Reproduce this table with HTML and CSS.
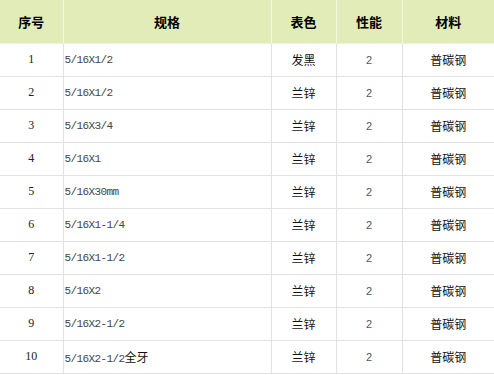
FILE: index.html
```html
<!DOCTYPE html>
<html lang="zh-CN">
<head>
    <meta charset="UTF-8">
    <meta name="viewport" content="width=device-width, initial-scale=1.0">
    <title>产品规格</title>
    <link rel="stylesheet" href="styles.css">
</head>
<body>
    <table class="spec-table">
        <colgroup>
            <col class="col-no">
            <col class="col-size">
            <col class="col-color">
            <col class="col-grade">
            <col class="col-material">
        </colgroup>
        <thead>
            <tr>
                <th>序号</th>
                <th>规格</th>
                <th>表色</th>
                <th>性能</th>
                <th>材料</th>
            </tr>
        </thead>
        <tbody>
            <tr><td class="no">1</td><td class="size">5/16X1/2</td><td class="cn">发黑</td><td class="grade">2</td><td class="cn">普碳钢</td></tr>
            <tr><td class="no">2</td><td class="size">5/16X1/2</td><td class="cn">兰锌</td><td class="grade">2</td><td class="cn">普碳钢</td></tr>
            <tr><td class="no">3</td><td class="size">5/16X3/4</td><td class="cn">兰锌</td><td class="grade">2</td><td class="cn">普碳钢</td></tr>
            <tr><td class="no">4</td><td class="size">5/16X1</td><td class="cn">兰锌</td><td class="grade">2</td><td class="cn">普碳钢</td></tr>
            <tr><td class="no">5</td><td class="size">5/16X30mm</td><td class="cn">兰锌</td><td class="grade">2</td><td class="cn">普碳钢</td></tr>
            <tr><td class="no">6</td><td class="size">5/16X1-1/4</td><td class="cn">兰锌</td><td class="grade">2</td><td class="cn">普碳钢</td></tr>
            <tr><td class="no">7</td><td class="size">5/16X1-1/2</td><td class="cn">兰锌</td><td class="grade">2</td><td class="cn">普碳钢</td></tr>
            <tr><td class="no">8</td><td class="size">5/16X2</td><td class="cn">兰锌</td><td class="grade">2</td><td class="cn">普碳钢</td></tr>
            <tr><td class="no">9</td><td class="size">5/16X2-1/2</td><td class="cn">兰锌</td><td class="grade">2</td><td class="cn">普碳钢</td></tr>
            <tr><td class="no">10</td><td class="size">5/16X2-1/2<span class="cn-inline">全牙</span></td><td class="cn">兰锌</td><td class="grade">2</td><td class="cn">普碳钢</td></tr>
        </tbody>
    </table>
</body>
</html>
```

FILE: styles.css
```css
/* Global Styles */
body {
    margin: 0;
    padding: 0;
    background: #fff;
    font-family: "Noto Sans CJK SC", sans-serif;
    color: #333;
}

.spec-table {
    width: 494px;
    border-collapse: collapse;
    table-layout: fixed;
}

.col-no { width: 63px; }
.col-size { width: 208px; }
.col-color { width: 65px; }
.col-grade { width: 66px; }
.col-material { width: 92px; }

/* Header */
.spec-table th {
    height: 43px;
    padding: 0;
    background: #e1ecb8;
    border-left: 1px solid #f3f8e2;
    border-bottom: 1px solid #eef5d6;
    font-size: 13px;
    font-weight: bold;
    color: #000;
    text-align: center;
    box-sizing: border-box;
}

.spec-table th:first-child {
    border-left: none;
}

/* Rows */
.spec-table td {
    height: 33px;
    padding: 0;
    border-left: 1px solid #e2e2e2;
    border-bottom: 1px solid #e2e2e2;
    text-align: center;
    font-size: 12px;
    color: #222;
    box-sizing: border-box;
}

.spec-table td:first-child {
    border-left: none;
}

.spec-table td.no {
    font-family: "Liberation Serif", serif;
    font-size: 12px;
    color: #222;
}

.spec-table td.size {
    text-align: left;
    padding-left: 1px;
    font-family: "Liberation Mono", monospace;
    font-size: 11px;
    letter-spacing: -0.6px;
    color: #444;
}

.cn-inline {
    font-family: "Noto Sans CJK SC", sans-serif;
    font-size: 12px;
    letter-spacing: 0;
    color: #111;
}

.spec-table td.cn {
    font-size: 12px;
    color: #111;
}

.spec-table td.grade {
    font-family: "Liberation Sans", sans-serif;
    font-size: 11px;
    color: #555;
}
```
